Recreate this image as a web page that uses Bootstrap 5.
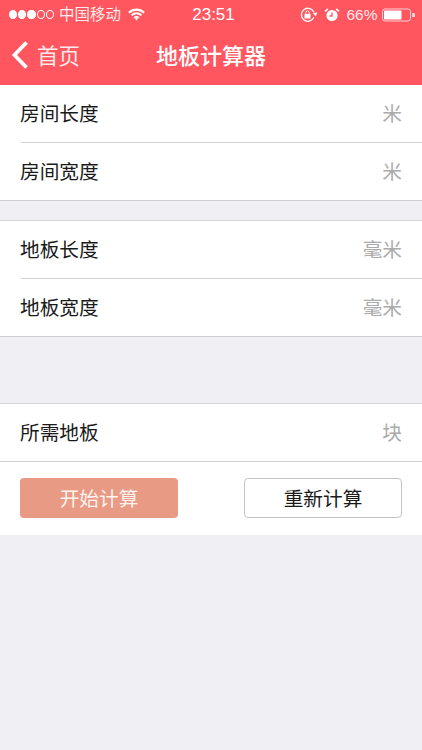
<!DOCTYPE html>
<html lang="zh"><head><meta charset="utf-8">
<link href="https://cdn.jsdelivr.net/npm/bootstrap@5.3.0/dist/css/bootstrap.min.css" rel="stylesheet">
<style>
html,body{height:100%}
body{background:#efeff4;font-family:"Noto Sans CJK SC","Liberation Sans",sans-serif;color:#111;overflow:hidden}
.hdr{background:#ff5660;color:#fff;height:85px}
.stat{height:29px;padding:0 7.5px 0 9px;font-size:15.5px;font-family:"Liberation Sans","Noto Sans CJK SC",sans-serif;line-height:29px;color:#ffe9ea}
.stat .sig{font-size:0;gap:1px;width:45px}
.dot{width:9px;height:9px;border-radius:50%;border:1px solid #fff;display:inline-block}
.dot.on{background:#fff}
.carrier{margin-left:5px;width:65px;white-space:nowrap}
.clock{position:absolute;left:5px;right:0;text-align:center;font-size:17px;font-weight:500;color:#fff}
.navline{height:54px;position:relative}
.back{padding:0 0 2px 10px;gap:7px;font-size:21.5px;color:#ffe9ea;line-height:1}
.ttl{position:absolute;left:0;right:0;top:0;height:100%;font-size:22px;color:#fff;font-weight:500;padding-bottom:4px}
.grp{background:#fff;border-top:1px solid #d4d4d6;border-bottom:1px solid #cfcfd2}
.grp.first{border-top:0}
.rowi{height:57px;padding:0 20px 2px;font-size:19.7px;line-height:1;color:#1a1a1a}
.rowi+.rowi{height:58px;position:relative;padding-bottom:0}
.rowi+.rowi::before{content:"";position:absolute;left:21px;right:0;top:0;height:1px;background:#d2d2d4}
.unit{color:#ababab}
.gap1{height:19px}.gap2{height:66px}
.acts{background:#fff;padding:16px 20px 17px;height:73px}
.bt{width:158px;height:40px;border-radius:4px;font-size:19.7px;padding:0;line-height:1;--bs-btn-padding-y:0}
.bt1{background:#e99a85;border:0;color:#fff3ee}
.bt2{background:#fff;border:1px solid #c4c4c6;color:#1a1a1a}
.ic-gap{margin-left:6px}
</style></head><body>
<header class="hdr">
<div class="stat d-flex align-items-center position-relative">
<span class="clock">23:51</span>
<span class="sig d-flex align-items-center"><i class="dot on"></i><i class="dot on"></i><i class="dot on"></i><i class="dot"></i><i class="dot"></i></span>
<span class="carrier">中国移动</span>
<svg width="17" height="13" viewBox="0 0 19 14" class="ms-1"><path d="M1 5 A12 12 0 0 1 18 5M4 8 A7.500 7.500 0 0 1 15 8M7 11 A3.400 3.400 0 0 1 12 11" fill="none" stroke="#fff" stroke-width="2.400"/><path d="M8 12l1.500-1.500L11 12l-1.500 1.600z" fill="#fff"/></svg>
<span class="ms-auto d-flex align-items-center">
<svg width="19" height="16" viewBox="0 0 19 16"><path d="M15 5.500A6.500 6.500 0 1 0 14.800 10.500" fill="none" stroke="#fff" stroke-width="1.300"/><path d="M13 6l4.500-.5L15.500 9.500z" fill="#fff" transform="translate(1 0)"/><rect x="5.500" y="7" width="6" height="4.500" rx=".6" fill="#fff"/><path d="M6.800 7V5.600a1.700 1.700 0 0 1 3.400 0V7" fill="none" stroke="#fff" stroke-width="1"/></svg>
<svg width="16" height="16" viewBox="0 0 16 16" class="ic-gap"><circle cx="8" cy="8.500" r="5.600" fill="#fff"/><path d="M8 5.500V9H5.500" fill="none" stroke="#ff5660" stroke-width="1.300"/><path d="M1 4.500 3.800 1.800M15 4.500 12.200 1.800" stroke="#fff" stroke-width="1.600"/></svg>
<span class="ic-gap">66%</span>
<svg width="33" height="14" viewBox="0 0 33 14" class="ms-1"><rect x=".5" y="1" width="28" height="12" rx="2.500" fill="none" stroke="#ffd0d2"/><rect x="2" y="2.500" width="17.500" height="9" rx="1" fill="#fff"/><path d="M30 5h1.500a1 1 0 0 1 0 4H30z" fill="#ffd0d2"/></svg>
</span>
</div>
<div class="navline d-flex align-items-center">
<div class="back d-flex align-items-center">
<svg width="20" height="30" viewBox="0 0 20 30"><path d="M16.500 2.500 4.500 15l12 12.500" fill="none" stroke="#fff" stroke-width="3.800"/></svg>
<span>首页</span></div>
<div class="ttl d-flex align-items-center justify-content-center">地板计算器</div>
</div>
</header>
<section class="grp first">
<div class="rowi d-flex justify-content-between align-items-center"><span>房间长度</span><span class="unit">米</span></div>
<div class="rowi d-flex justify-content-between align-items-center"><span>房间宽度</span><span class="unit">米</span></div>
</section>
<div class="gap1"></div>
<section class="grp">
<div class="rowi d-flex justify-content-between align-items-center"><span>地板长度</span><span class="unit">毫米</span></div>
<div class="rowi d-flex justify-content-between align-items-center"><span>地板宽度</span><span class="unit">毫米</span></div>
</section>
<div class="gap2"></div>
<section class="grp">
<div class="rowi d-flex justify-content-between align-items-center"><span>所需地板</span><span class="unit">块</span></div>
</section>
<div class="acts d-flex justify-content-between">
<button class="btn bt bt1" type="button">开始计算</button>
<button class="btn bt bt2" type="button">重新计算</button>
</div>
<script src="https://cdn.jsdelivr.net/npm/bootstrap@5.3.0/dist/js/bootstrap.bundle.min.js"></script>
</body></html>
